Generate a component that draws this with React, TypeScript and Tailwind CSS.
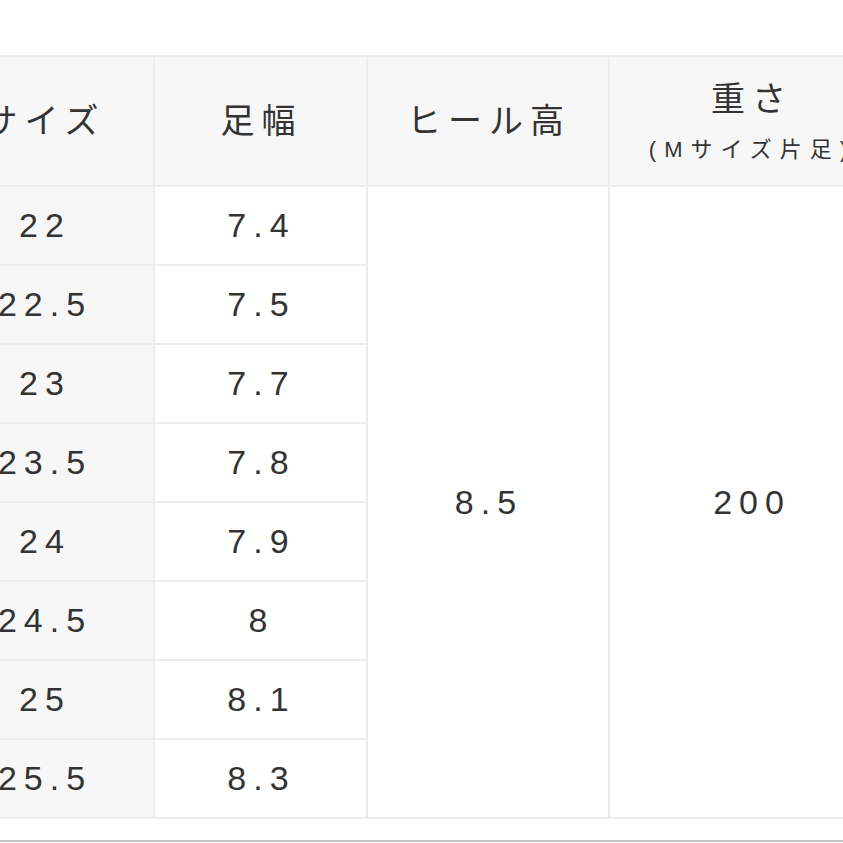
import React from "react";

const rows: [string, string][] = [
  ["22", "7.4"],
  ["22.5", "7.5"],
  ["23", "7.7"],
  ["23.5", "7.8"],
  ["24", "7.9"],
  ["24.5", "8"],
  ["25", "8.1"],
  ["25.5", "8.3"],
];

const font = { fontFamily: '"Liberation Sans", "Noto Sans CJK JP", sans-serif' };

export default function App() {
  return (
    <div className="w-[843px] h-[843px] overflow-hidden bg-white" style={font}>
      <div className="h-[55px]" />
      <div className="ml-[-66px] w-[960px] bg-[#ececec] py-[2px]">
        <div className="grid grid-cols-[219px_211px_240px_282px] gap-[2px] auto-rows-[77px] grid-rows-[128px] text-[#333]">
          <div className="bg-[#f7f7f7] flex items-center justify-center text-[34px] tracking-[7px] pl-[2px]">サイズ</div>
          <div className="bg-[#f7f7f7] flex items-center justify-center text-[34px] tracking-[7px] pl-[2px]">足幅</div>
          <div className="bg-[#f7f7f7] flex items-center justify-center text-[34px] tracking-[7px] pl-[2px]">ヒール高</div>
          <div className="bg-[#f7f7f7] flex flex-col items-center justify-center pl-[2px]">
            <div className="text-[34px] tracking-[7px] leading-[44px]">重さ</div>
            <div className="text-[22px] tracking-[8px] leading-[30px] mt-[14px] whitespace-nowrap">(Mサイズ片足)</div>
          </div>
          {rows.map(([s, w], i) => (
            <React.Fragment key={s}>
              <div className="bg-[#f7f7f7] flex items-center justify-center text-[34px] tracking-[7px] pl-[3px]">{s}</div>
              <div className="bg-white flex items-center justify-center text-[34px] tracking-[7px] pl-[2px]">{w}</div>
              {i === 0 && (
                <>
                  <div className="bg-white row-span-8 flex items-center justify-center text-[34px] tracking-[7px] pl-[2px]">8.5</div>
                  <div className="bg-white row-span-8 flex items-center justify-center text-[34px] tracking-[7px] pl-[2px]">200</div>
                </>
              )}
            </React.Fragment>
          ))}
        </div>
      </div>
      <div className="h-[21px]" />
      <div className="h-[2px] bg-[#c4c4c4]" />
    </div>
  );
}
